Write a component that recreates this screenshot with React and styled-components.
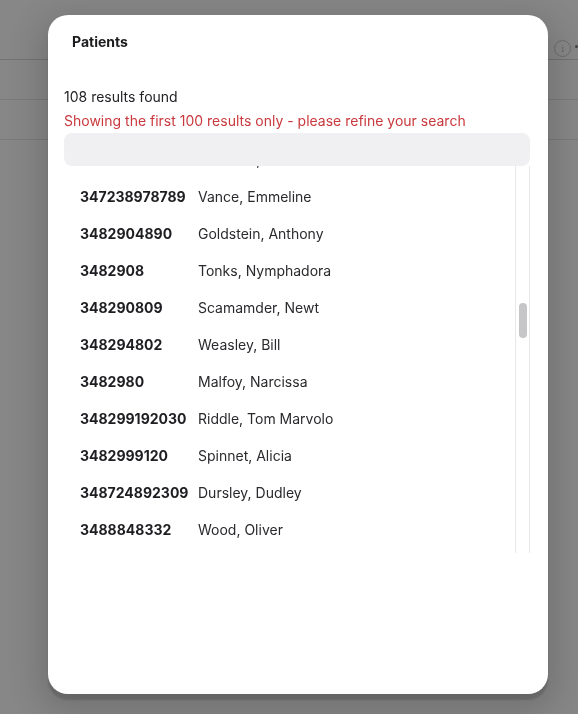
import React from 'react'
import styled, { createGlobalStyle } from 'styled-components'

const GlobalStyle = createGlobalStyle`
  html, body {
    margin: 0;
    padding: 0;
    height: 100%;
  }
  body {
    background: #878787;
    font-family: Inter, "Noto Sans", sans-serif;
    overflow: hidden;
  }
`

// the page under the overlay, dimmed
const Backdrop = styled.div`
  height: 714px;
  display: flex;
  flex-direction: column;
`

const TopBar = styled.div`
  height: 60px;
  border-bottom: 1px solid #727272;
  display: flex;
  align-items: flex-start;
  justify-content: flex-end;
  padding: 40px 0 0;
  box-sizing: border-box;
  gap: 14px;
`

const InfoIcon = styled.span`
  width: 15px;
  height: 15px;
  border: 1px solid #6c6c6c;
  border-radius: 50%;
  color: #6c6c6c;
  font-size: 10px;
  font-family: "DejaVu Serif", serif;
  display: flex;
  align-items: center;
  justify-content: center;
  margin-right: -10px;
`

const Dot = styled.span`
  width: 3px;
  height: 3px;
  border-radius: 50%;
  background: #444;
  margin-top: 5px;
`

const PageRow = styled.div`
  height: 39px;
  border-bottom: 1px solid #7a7a7a;
`

const Overlay = styled.div`
  position: fixed;
  inset: 0;
  display: flex;
  justify-content: center;
  align-items: flex-start;
  padding: 15px 0 0 18px;
`

const Modal = styled.div`
  width: 500px;
  height: 679px;
  background: #fff;
  border-radius: 20px;
  box-shadow: 0 6px 2px rgba(0, 0, 0, 0.14), 0 10px 34px 8px rgba(0, 0, 0, 0.16);
  display: flex;
  flex-direction: column;
`

const Title = styled.h2`
  margin: 0;
  padding: 17px 24px 0;
  font-size: 14px;
  line-height: 20px;
  font-weight: 700;
  color: #1c1c1e;
`

const Body = styled.div`
  padding: 35px 18px 0 16px;
  display: flex;
  flex-direction: column;
`

const Count = styled.p`
  margin: 0;
  font-size: 14px;
  line-height: 20px;
  color: #222226;
`

const Warning = styled.p`
  margin: 4px 0 2px;
  font-size: 14px;
  line-height: 20px;
  color: #c9393e;
`

const HeaderBar = styled.div`
  height: 33px;
  background: #f0f0f2;
  border-radius: 8px;
  position: relative;
  z-index: 1;
`

const List = styled.div`
  height: 387px;
  display: flex;
  overflow: hidden;
`

const Rows = styled.div`
  flex: 1;
  margin-top: -25px;
`

const Row = styled.div`
  height: 37px;
  display: flex;
  align-items: center;
  padding-left: 16px;
  font-size: 14px;
  color: #2a2a2e;
`

const Id = styled.span`
  width: 118px;
  font-weight: 700;
  color: #1e1e22;
`

const Name = styled.span`
  font-weight: 400;
`

const Track = styled.div`
  width: 13px;
  border-left: 1px solid #e8e8e8;
  border-right: 1px solid #e8e8e8;
  display: flex;
  justify-content: center;
`

const Thumb = styled.div`
  width: 8px;
  height: 35px;
  margin-top: 137px;
  border-radius: 4px;
  background: #c6c6c8;
`

const patients = [
  ['348298371', 'Lockhart, Bertie'],
  ['347238978789', 'Vance, Emmeline'],
  ['3482904890', 'Goldstein, Anthony'],
  ['3482908', 'Tonks, Nymphadora'],
  ['348290809', 'Scamamder, Newt'],
  ['348294802', 'Weasley, Bill'],
  ['3482980', 'Malfoy, Narcissa'],
  ['348299192030', 'Riddle, Tom Marvolo'],
  ['3482999120', 'Spinnet, Alicia'],
  ['348724892309', 'Dursley, Dudley'],
  ['3488848332', 'Wood, Oliver'],
]

export default function App() {
  return (
    <>
      <GlobalStyle />
      <Backdrop>
        <TopBar>
          <InfoIcon>i</InfoIcon>
          <Dot />
        </TopBar>
        <PageRow />
        <PageRow />
      </Backdrop>
      <Overlay>
        <Modal>
          <Title>Patients</Title>
          <Body>
            <Count>108 results found</Count>
            <Warning>Showing the first 100 results only - please refine your search</Warning>
            <HeaderBar />
            <List>
              <Rows>
                {patients.map(([id, name]) => (
                  <Row key={id}>
                    <Id>{id}</Id>
                    <Name>{name}</Name>
                  </Row>
                ))}
              </Rows>
              <Track>
                <Thumb />
              </Track>
            </List>
          </Body>
        </Modal>
      </Overlay>
    </>
  )
}
